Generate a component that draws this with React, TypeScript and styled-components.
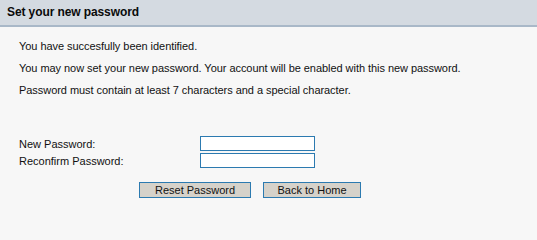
import styled, { createGlobalStyle } from "styled-components";

const GlobalStyle = createGlobalStyle`
  html, body {
    margin: 0;
    padding: 0;
    background: #f7f7f7;
  }
  body {
    font-family: "Liberation Sans", Arial, sans-serif;
    font-size: 11px;
    color: #111111;
  }
`;

export default function App() {
  return (
    <>
      <GlobalStyle />
      <Panel>
        <PanelHeader>Set your new password</PanelHeader>
        <PanelBody>
          <Message>You have succesfully been identified.</Message>
          <Message>
            You may now set your new password. Your account will be enabled
            with this new password.
          </Message>
          <Message>
            Password must contain at least 7 characters and a special
            character.
          </Message>
          <Form>
            <FieldRow>
              <FieldLabel>New Password:</FieldLabel>
              <TextInput type="password" />
            </FieldRow>
            <FieldRow>
              <FieldLabel>Reconfirm Password:</FieldLabel>
              <TextInput type="password" />
            </FieldRow>
            <ButtonRow>
              <ActionButton $width={112}>Reset Password</ActionButton>
              <ActionButton $width={98}>Back to Home</ActionButton>
            </ButtonRow>
          </Form>
        </PanelBody>
      </Panel>
    </>
  );
}

const Panel = styled.div`
  width: 537px;
  height: 207px;
  background: #f7f7f7;
`;

const PanelHeader = styled.div`
  height: 25px;
  line-height: 25px;
  padding-left: 7px;
  background: #d4dae1;
  border-bottom: 2px solid #a9b8c8;
  font-size: 12px;
  font-weight: bold;
  letter-spacing: -0.1px;
  color: #0a0a0a;
`;

const PanelBody = styled.div`
  padding: 12px 19px 0;
  display: flex;
  flex-direction: column;
`;

const Message = styled.div`
  height: 22px;
  line-height: 14px;
  letter-spacing: -0.05px;
`;

const Form = styled.div`
  margin-top: 31px;
  display: flex;
  flex-direction: column;
  gap: 2px;
`;

const FieldRow = styled.div`
  display: flex;
  align-items: center;
  height: 15px;
`;

const FieldLabel = styled.span`
  width: 181px;
`;

const TextInput = styled.input`
  box-sizing: border-box;
  width: 115px;
  height: 15px;
  margin: 0;
  padding: 0 2px;
  border: 1px solid #2c7ab0;
  background: #ffffff;
  font: inherit;
`;

const ButtonRow = styled.div`
  display: flex;
  gap: 12px;
  margin-top: 12px;
  padding-left: 120px;
`;

const ActionButton = styled.button<{ $width: number }>`
  box-sizing: border-box;
  width: ${(p) => p.$width}px;
  height: 16px;
  margin: 0;
  padding: 0;
  border: 1px solid #2c7ab0;
  background: #d6d2ca;
  font-family: "Liberation Sans", Arial, sans-serif;
  font-size: 11px;
  line-height: 14px;
  color: #111111;
  cursor: pointer;
`;
